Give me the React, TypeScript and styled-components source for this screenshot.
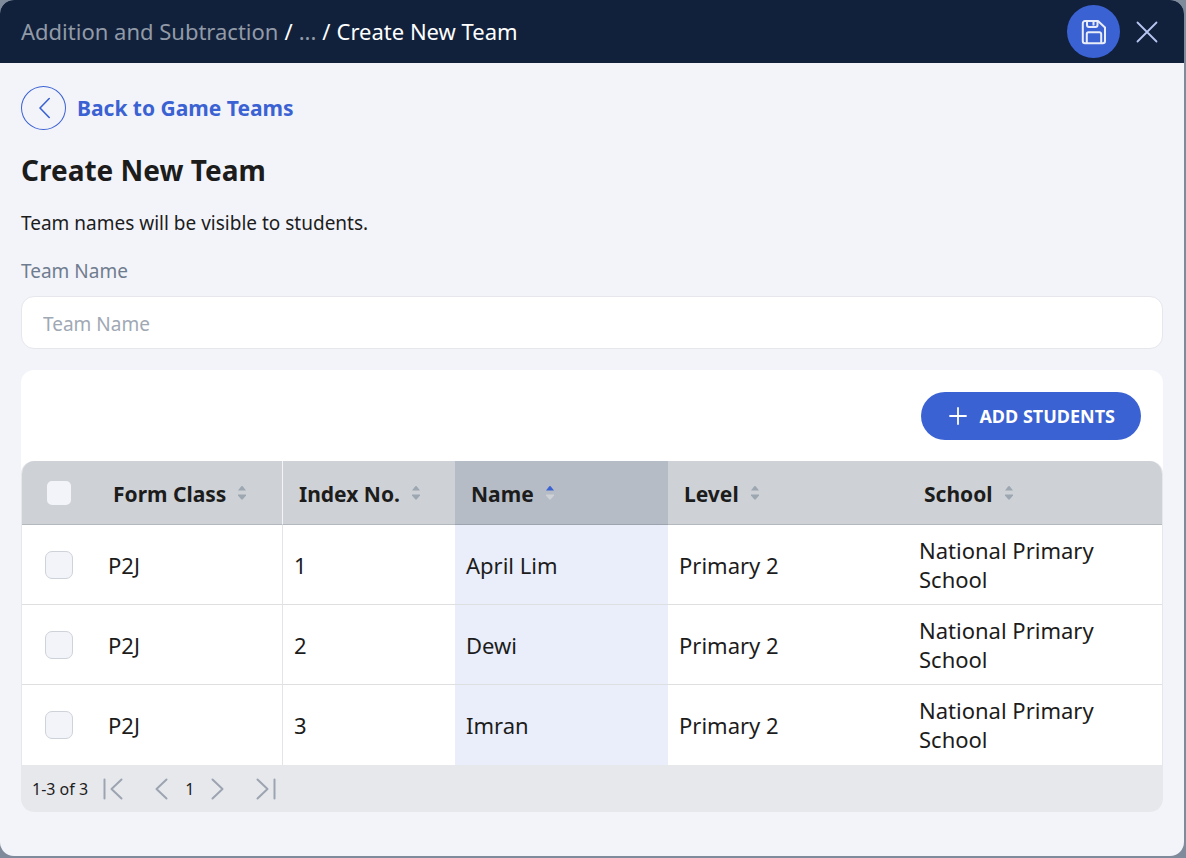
import React, { useState } from "react";
import styled, { createGlobalStyle } from "styled-components";

const GlobalStyle = createGlobalStyle`
  * { box-sizing: border-box; }
  body {
    margin: 0;
    background: #7f8b9b;
    color: #1c1c1c;
    font-family: "Noto Sans", sans-serif;
  }
  button, input { font-family: inherit; }
`;

const Dialog = styled.main`
  display: flex;
  flex-direction: column;
  min-height: calc(100vh - 2px);
  margin: 0 2px 2px 0;
  border-radius: 14px;
  background: #f3f4f9;
  overflow: hidden;
`;

const TopBar = styled.header`
  display: flex;
  align-items: center;
  justify-content: space-between;
  height: 63px;
  padding: 0 24px 0 21px;
  background: #11213b;
`;

const Breadcrumb = styled.nav`
  display: flex;
  gap: 6px;
  padding-bottom: 2px;
  font-size: 22px;
  line-height: 30px;
  color: #fff;
`;

const Crumb = styled.a`
  color: #929aa7;
  text-decoration: none;
`;

const BarActions = styled.div`
  display: flex;
  align-items: center;
  gap: 14px;
`;

const IconButton = styled.button<{ $size: number; $filled?: boolean }>`
  display: flex;
  align-items: center;
  justify-content: center;
  width: ${(p) => p.$size}px;
  height: ${(p) => p.$size}px;
  padding: 0;
  border: 0;
  border-radius: 50%;
  background: ${(p) => (p.$filled ? "#3b62d3" : "transparent")};
  color: ${(p) => (p.$filled ? "#e9edfa" : "#b6c5f2")};
  cursor: pointer;
`;

const Content = styled.div`
  padding: 23px 21px 44px;
`;

const BackLink = styled.a`
  display: inline-flex;
  align-items: center;
  gap: 11px;
  color: #3b62d3;
  font-size: 21px;
  font-weight: 700;
  line-height: 30px;
  text-decoration: none;
`;

const BackCircle = styled.span`
  display: flex;
  align-items: center;
  justify-content: center;
  width: 45px;
  height: 44px;
  border: 1px solid #3b62d3;
  border-radius: 50%;
`;

const Title = styled.h1`
  margin: 20px 0 0;
  font-size: 28px;
  font-weight: 700;
  line-height: 40px;
`;

const Hint = styled.p`
  margin: 19px 0 0;
  font-size: 19px;
  line-height: 28px;
`;

const FieldLabel = styled.label`
  display: block;
  margin-top: 20px;
  color: #6f7c8f;
  font-size: 19px;
  line-height: 28px;
`;

const TextField = styled.input`
  display: block;
  width: 100%;
  height: 53px;
  margin-top: 11px;
  padding: 2px 21px 0;
  border: 1px solid #e6e7ec;
  border-radius: 13px;
  background: #fff;
  color: #1c1c1c;
  font-size: 19px;
  &::placeholder { color: #a0a8b4; opacity: 1; }
`;

const Panel = styled.section`
  margin-top: 21px;
  border-radius: 13px;
  background: #fff;
  overflow: hidden;
`;

const PanelTools = styled.div`
  display: flex;
  justify-content: flex-end;
  padding: 22px 22px 21px;
`;

const AddButton = styled.button`
  display: flex;
  align-items: center;
  gap: 12px;
  height: 48px;
  padding: 0 26px 0 28px;
  border: 0;
  border-radius: 24px;
  background: #3b62d3;
  color: #fff;
  font-size: 18px;
  font-weight: 700;
  cursor: pointer;
`;

const TableFrame = styled.div`
  border: solid #e6e7eb;
  border-width: 0 1px;
  border-radius: 13px 13px 0 0;
  overflow: hidden;
`;

const Table = styled.table`
  width: 100%;
  table-layout: fixed;
  border-spacing: 0;
  font-size: 22px;
  line-height: 29px;
  text-align: left;
`;

const HeadCell = styled.th<{ $sorted?: boolean; $ruled?: boolean }>`
  height: 64px;
  padding: 4px 0 0 16px;
  border-bottom: 1px solid ${(p) => (p.$sorted ? "#9da4ae" : "#b3b8bf")};
  border-right: ${(p) => (p.$ruled ? "1px solid #f3f4f9" : "0")};
  background: ${(p) => (p.$sorted ? "#b5bcc5" : "#ced1d6")};
  font-size: 21px;
  font-weight: 700;
`;

const SelectAllCell = styled(HeadCell)`
  padding-top: 0;
`;

const Cell = styled.td<{ $sorted?: boolean; $ruled?: boolean }>`
  height: 80px;
  padding: 11px 24px 10px 11px;
  border-bottom: 1px solid #dedfe1;
  border-right: ${(p) => (p.$ruled ? "1px solid #e3e4e8" : "0")};
  background: ${(p) => (p.$sorted ? "#e9eefa" : "#fff")};
  tr:last-child > & { border-bottom: 0; padding-bottom: 11px; }
`;

const CheckCell = styled(Cell)`
  padding-top: 10px;
`;

const SchoolName = styled.span`
  display: block;
  max-width: 200px;
`;

const SortButton = styled.button`
  display: flex;
  align-items: center;
  gap: 12px;
  padding: 0;
  border: 0;
  background: none;
  color: inherit;
  font-size: inherit;
  font-weight: inherit;
  line-height: inherit;
  cursor: pointer;
  svg { margin-bottom: 3px; }
`;

const CheckBox = styled.input`
  appearance: none;
  display: block;
  width: 28px;
  height: 28px;
  margin: 0 0 0 12px;
  border: 1px solid #ced2d9;
  border-radius: 7px;
  background: #f3f4f9;
  &:checked { background: #3b62d3; }
  th > & { border: 2px solid #ced1d6; margin: 0 0 0 7px; }
`;

const Pager = styled.footer`
  display: flex;
  align-items: center;
  height: 47px;
  padding-left: 11px;
  background: #e7e8ec;
  font-size: 16px;
  line-height: 24px;
`;

const PageButton = styled.button`
  display: flex;
  padding: 0;
  border: 0;
  background: none;
  color: #9ca4b1;
`;

const PageGroup = styled.div`
  display: flex;
  align-items: center;
  gap: 17px;
  margin: 0 30px;
`;

const PageRange = styled.span`
  margin-right: 14px;
`;

const SaveIcon = () => (
  <svg width="26" height="26" viewBox="0 0 26 26" fill="none" stroke="currentColor" strokeWidth="2" strokeLinejoin="round">
    <path d="M4 2H17L24 8.500V22A2.200 2.200 0 0 1 21.800 24.200H4A2.200 2.200 0 0 1 1.800 22V4.200A2.200 2.200 0 0 1 4 2Z" />
    <path d="M6 2V6A2 2 0 0 0 8 8H14.500A2 2 0 0 0 16.500 6V2M12.500 2.500V6.500M5.800 24V15A1.800 1.800 0 0 1 7.600 13.200H18.400A1.800 1.800 0 0 1 20.200 15V24" />
  </svg>
);

const CloseIcon = () => (
  <svg width="22" height="22" viewBox="0 0 22 22" fill="none" stroke="currentColor" strokeWidth="1.8" strokeLinecap="round">
    <path d="M1.500 1.500l19 19M20.500 1.500l-19 19" />
  </svg>
);

const BackIcon = () => (
  <svg width="12" height="22" viewBox="0 0 12 22" fill="none" stroke="currentColor" strokeWidth="1.600" strokeLinecap="round" strokeLinejoin="round">
    <path d="M11.200 1.500L2 11L11.200 20.500" />
  </svg>
);

const PlusIcon = () => (
  <svg width="18" height="18" viewBox="0 0 18 18" stroke="currentColor" strokeWidth="1.800" strokeLinecap="round">
    <path d="M9 1v16M1 9h16" />
  </svg>
);

const SortIcon = ({ sorted }: { sorted?: boolean }) => (
  <svg width="8" height="16" viewBox="0 0 8 16">
    <path d="M0 5.500L3.300 1.300Q4 .5 4.700 1.300L8 5.500Z" fill={sorted ? "#3b62d3" : "#9da7b1"} />
    <path d="M0 9.500H8V10.500L4.800 14.300Q4 15 3.200 14.300L0 10.500Z" fill={sorted ? "#ced1d6" : "#9da7b1"} />
  </svg>
);

const PageIcon = ({ d, width }: { d: string; width: number }) => (
  <svg width={width} height="22" viewBox={`0 0 ${width} 22`} fill="none" stroke="currentColor" strokeWidth="2" strokeLinecap="round" strokeLinejoin="round">
    <path d={d} />
  </svg>
);

const columns = ["Form Class", "Index No.", "Name", "Level", "School"];

const students = [
  { form: "P2J", index: 1, name: "April Lim", level: "Primary 2", school: "National Primary School" },
  { form: "P2J", index: 2, name: "Dewi", level: "Primary 2", school: "National Primary School" },
  { form: "P2J", index: 3, name: "Imran", level: "Primary 2", school: "National Primary School" },
];

export default function App() {
  const [teamName, setTeamName] = useState("");
  return (
    <>
      <GlobalStyle />
      <Dialog>
        <TopBar>
          <Breadcrumb aria-label="Breadcrumb">
            <Crumb href="#game">Addition and Subtraction</Crumb>
            <span>/</span>
            <Crumb href="#more">...</Crumb>
            <span>/</span>
            <span>Create New Team</span>
          </Breadcrumb>
          <BarActions>
            <IconButton $size={53} $filled type="button" aria-label="Save"><SaveIcon /></IconButton>
            <IconButton $size={26} type="button" aria-label="Close"><CloseIcon /></IconButton>
          </BarActions>
        </TopBar>
        <Content>
          <BackLink href="#teams">
            <BackCircle><BackIcon /></BackCircle>
            Back to Game Teams
          </BackLink>
          <Title>Create New Team</Title>
          <Hint>Team names will be visible to students.</Hint>
          <FieldLabel htmlFor="team-name">Team Name</FieldLabel>
          <TextField
            id="team-name"
            placeholder="Team Name"
            value={teamName}
            onChange={(e) => setTeamName(e.target.value)}
          />
          <Panel>
            <PanelTools>
              <AddButton type="button"><PlusIcon />ADD STUDENTS</AddButton>
            </PanelTools>
            <TableFrame>
              <Table>
                <colgroup>
                  <col style={{ width: 75 }} />
                  <col style={{ width: 186 }} />
                  <col style={{ width: 172 }} />
                  <col style={{ width: 213 }} />
                  <col style={{ width: 240 }} />
                  <col />
                </colgroup>
                <thead>
                  <tr>
                    <SelectAllCell><CheckBox type="checkbox" aria-label="Select all students" /></SelectAllCell>
                    {columns.map((label) => (
                      <HeadCell key={label} scope="col" $sorted={label === "Name"} $ruled={label === "Form Class"}>
                        <SortButton type="button">{label}<SortIcon sorted={label === "Name"} /></SortButton>
                      </HeadCell>
                    ))}
                  </tr>
                </thead>
                <tbody>
                  {students.map((s) => (
                    <tr key={s.index}>
                      <CheckCell><CheckBox type="checkbox" aria-label={`Select ${s.name}`} /></CheckCell>
                      <Cell $ruled>{s.form}</Cell>
                      <Cell>{s.index}</Cell>
                      <Cell $sorted>{s.name}</Cell>
                      <Cell>{s.level}</Cell>
                      <Cell><SchoolName>{s.school}</SchoolName></Cell>
                    </tr>
                  ))}
                </tbody>
              </Table>
            </TableFrame>
            <Pager>
              <PageRange>1-3 of 3</PageRange>
              <PageButton type="button" aria-label="First page"><PageIcon width={22} d="M2.500 1.500v19M19.500 1.500L9.500 11l10 9.500" /></PageButton>
              <PageGroup>
                <PageButton type="button" aria-label="Previous page"><PageIcon width={14} d="M12.500 1.500L2.500 11l10 9.500" /></PageButton>
                <span>1</span>
                <PageButton type="button" aria-label="Next page"><PageIcon width={14} d="M1.500 1.500L11.500 11l-10 9.500" /></PageButton>
              </PageGroup>
              <PageButton type="button" aria-label="Last page"><PageIcon width={22} d="M19.500 1.500v19M2.500 1.500L12.500 11L2.500 20.500" /></PageButton>
            </Pager>
          </Panel>
        </Content>
      </Dialog>
    </>
  );
}
